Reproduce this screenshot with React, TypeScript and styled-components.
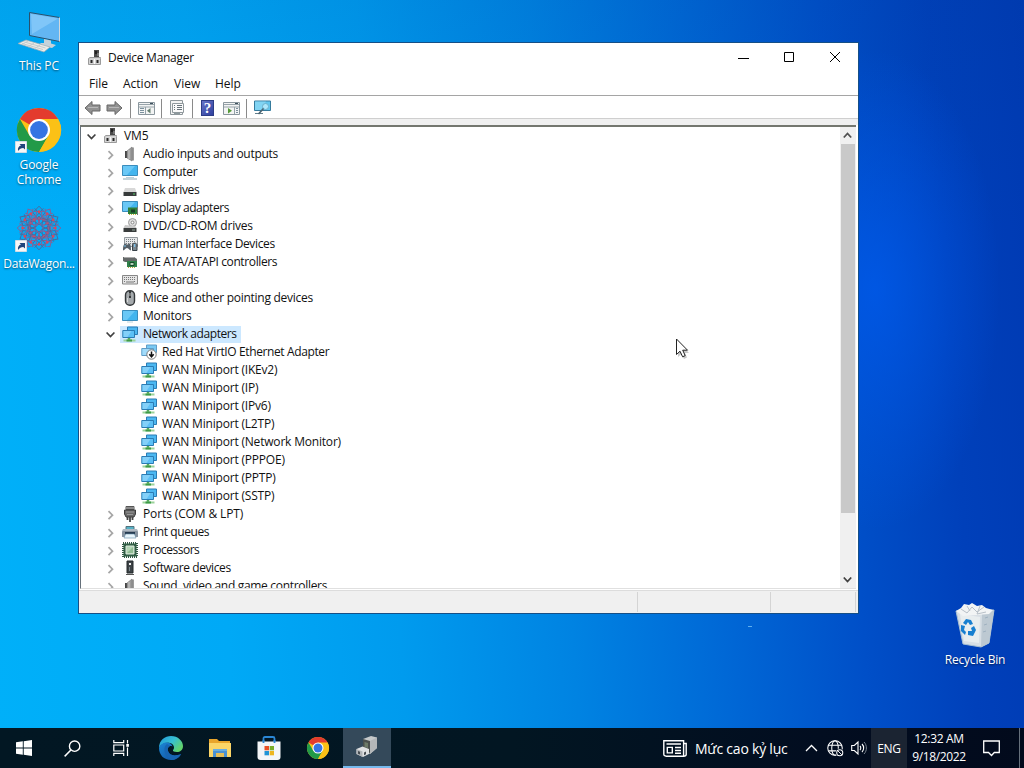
import React from "react";
import styled, { createGlobalStyle } from "styled-components";

const GlobalStyle = createGlobalStyle`
  * { box-sizing: border-box; }
  html, body { margin: 0; padding: 0; overflow: hidden; }
  body { font-family: "Open Sans", "Noto Sans", sans-serif; font-size: 12px; color: #111; }
  svg { display: block; flex: none; }
`;

const Desktop = styled.div`
  position: relative;
  width: 1024px;
  height: 768px;
  overflow: hidden;
  display: flex;
  flex-direction: column;
  background:
    radial-gradient(ellipse 125px 240px at 875px 290px, rgba(0, 92, 240, 0.7), rgba(0, 80, 230, 0) 100%),
    linear-gradient(180deg, rgba(0, 60, 140, 0.1), rgba(0, 60, 140, 0) 30%),
    linear-gradient(86deg, #00b0f9 0%, #00a9f6 22%, #009bee 38%, #0083e2 54%, #0068d6 68%, #004fc8 81%, #0040ba 91%, #003ab3 100%);
`;
const Workspace = styled.main`
  flex: 1;
  position: relative;
`;

/* Desktop shortcuts */
const Shortcut = styled.div<{ $x: number; $y: number; $track?: number }>`
  position: absolute;
  left: ${(p) => p.$x}px;
  top: ${(p) => p.$y}px;
  width: 80px;
  display: flex;
  flex-direction: column;
  align-items: center;
  gap: 1px;
  color: #fff;
  line-height: 15px;
  text-align: center;
  letter-spacing: ${(p) => p.$track ?? -0.1}px;
  text-shadow: 0 1px 2px rgba(0, 0, 0, 0.55);
`;

/* Window */
const Window = styled.section`
  position: absolute;
  left: 78px;
  top: 42px;
  width: 781px;
  height: 572px;
  border: 1px solid #164f86;
  background: #fff;
  display: flex;
  flex-direction: column;
`;
const TitleBar = styled.header`
  height: 29px;
  display: flex;
  align-items: center;
  padding-left: 8px;
`;
const Title = styled.h1`
  margin: 0 auto 0 5px;
  font: inherit;
  letter-spacing: -0.28px;
`;
const CaptionButton = styled.button`
  width: 46px;
  height: 29px;
  padding: 0;
  border: 0;
  background: none;
  display: grid;
  place-items: center;
`;
const MenuBar = styled.nav`
  height: 23px;
  display: flex;
  align-items: center;
  gap: 16px;
  padding-left: 10px;
`;
const MenuItem = styled.span<{ $w: number }>`
  width: ${(p) => p.$w}px;
  white-space: nowrap;
`;
const ToolBar = styled.div`
  height: 24px;
  border-top: 1px solid #a5a5a5;
  border-bottom: 1px solid #cfcfcf;
  display: flex;
  align-items: center;
  padding: 2px 0 0 5px;
`;
const Tool = styled.span<{ $w?: number }>`
  width: ${(p) => p.$w ?? 24}px;
  display: flex;
  align-items: center;
  justify-content: center;
`;
const ToolRule = styled.span`
  width: 1px;
  height: 19px;
  background: #8a8a8a;
  margin: 0 3px;
`;
const Gap = styled.div`
  height: 6px;
  background: #f0f0f0;
`;
const TreePane = styled.div`
  height: 464px;
  margin: 0 2px 0 1px;
  border-top: 2px solid #74776f;
  border-left: 1px solid #64707a;
  border-bottom: 1px solid #e0e0e0;
  display: flex;
`;
const Tree = styled.ul`
  flex: 1;
  margin: 0;
  padding: 0;
  list-style: none;
  overflow: hidden;
`;
const Row = styled.li<{ $depth: number }>`
  height: 18px;
  display: flex;
  align-items: center;
  padding-left: ${(p) => p.$depth * 19 + 5}px;
`;
const Twisty = styled.span`
  width: 15px;
  height: 18px;
  padding-top: 2px;
  display: grid;
  align-items: center;
`;
const Entry = styled.span<{ $selected?: boolean }>`
  height: 17px;
  display: flex;
  align-items: center;
  gap: 5px;
  padding: 0 4px 0 2px;
  background: ${(p) => (p.$selected ? "#cce8ff" : "transparent")};
`;
const Label = styled.span<{ $track: number }>`
  line-height: 15px;
  padding-bottom: 2px;
  white-space: nowrap;
  letter-spacing: ${(p) => p.$track}px;
`;
const ScrollBar = styled.div`
  width: 16px;
  background: #f0f0f0;
  display: flex;
  flex-direction: column;
`;
const ScrollArrow = styled.span`
  height: 17px;
  padding-right: 1px;
  display: grid;
  place-items: center;
`;
const Thumb = styled.div`
  height: 369px;
  margin: 0 1px auto;
  background: #c9c9c9;
`;
const StatusBar = styled.footer`
  flex: 1;
  margin-top: 1px;
  border-top: 1px solid #dcdcdc;
  background: #f0f0f0;
  display: flex;
  padding: 1px 2px 1px 0;
`;
const StatusCell = styled.div<{ $w: number }>`
  width: ${(p) => p.$w}px;
  border-right: 1px solid #d4d4d4;
`;

/* Taskbar */
const TaskBar = styled.footer`
  height: 40px;
  display: flex;
  background: linear-gradient(90deg, #021723 0%, #021622 50%, #020d20 80%, #020a1c 100%);
  color: #fff;
`;
const TaskButton = styled.span<{ $w?: number; $active?: boolean }>`
  width: ${(p) => p.$w ?? 49}px;
  display: grid;
  place-items: center;
  background: ${(p) => (p.$active ? "#34495a" : "transparent")};
  border-bottom: ${(p) => (p.$active ? "2px solid #76b9ed" : "0")};
`;
const News = styled.div`
  margin-left: auto;
  width: 140px;
  display: flex;
  align-items: center;
  gap: 8px;
  font-size: 14px;
  letter-spacing: -0.22px;
  white-space: nowrap;
`;
const Tray = styled.div`
  display: flex;
  align-items: center;
  width: 68px;
`;
const TrayCell = styled.span<{ $w: number }>`
  width: ${(p) => p.$w}px;
  display: grid;
  place-items: center;
`;
const Language = styled.div`
  width: 36px;
  display: grid;
  place-items: center;
  background: #1b2432;
  letter-spacing: -0.3px;
`;
const Clock = styled.div`
  width: 64px;
  padding-top: 2px;
  text-align: center;
  line-height: 18px;
  letter-spacing: -0.35px;
  white-space: nowrap;
`;
const Peek = styled.span`
  width: 5px;
  border-left: 1px solid #66707c;
`;
const Cursor = styled.svg`
  position: absolute;
  left: 675px;
  top: 338px;
`;
const Fleck = styled.span`
  position: absolute;
  left: 748px;
  top: 626px;
  width: 4px;
  height: 1px;
  background: #5fb0f0;
`;

const Ico = ({ s = 16, v = 16, children }: { s?: number; v?: number; children: React.ReactNode }) => (
  <svg width={s} height={s} viewBox={`0 0 ${v} ${v}`} fill="none">{children}</svg>
);

const MachineIcon = () => (
  <Ico>
    <path d="M7 0h5v8H7z" fill="#4a4a4a" />
    <path d="M8 1h2v3H8z" fill="#222" /><path d="M10.500 3h1v3h-1z" fill="#aaa" />
    <path d="M1.500 8.500 3 7.500h10.500l0 1v6h-12z" fill="#d4d4d4" stroke="#9b9b9b" />
    <path d="M3.500 10h2v3h-2zM9.500 10h2v3h-2z" fill="#292929" />
    <path d="M7.500 9v5" stroke="#fafafa" />
  </Ico>
);
const AudioIcon = () => (
  <Ico>
    <path d="M3 5h2v7H3z" fill="#454545" />
    <path d="M5 5 10 1v14l-5-3z" fill="#9c9c9c" stroke="#777" strokeWidth=".6" />
    <path d="M7 4v9" stroke="#ccc" /><path d="M11 1.500v13" stroke="#666" strokeWidth="1.300" />
  </Ico>
);
const ComputerIcon = () => (
  <Ico>
    <path d="M.5 1.500h15v10H.5z" fill="#43b5ee" stroke="#3a8dbd" />
    <path d="M1 2h12L5 11H1z" fill="#7bd0fa" opacity=".7" />
    <path d="M4 13.500h8" stroke="#b9d0db" /><path d="M1 15h14" stroke="#8ba8b5" />
  </Ico>
);
const MonitorIcon = () => (
  <Ico>
    <path d="M.5 2.500h15v10H.5z" fill="#43b5ee" stroke="#3a8dbd" />
    <path d="M1 3h12L5 12H1z" fill="#7bd0fa" opacity=".7" />
    <path d="M5 14h6" stroke="#bcd3de" />
  </Ico>
);
const DiskIcon = () => (
  <Ico>
    <path d="M3 6h10l1.500 4h-13z" fill="#d8d8d8" /><path d="M1.500 10h13v4h-13z" fill="#373b3b" />
    <path d="M11 12h2" stroke="#57ca68" />
  </Ico>
);
const DisplayIcon = () => (
  <Ico>
    <path d="M.5 1.500h15v10H.5z" fill="#43b5ee" stroke="#3a8dbd" />
    <path d="M1 2h12L5 11H1z" fill="#7bd0fa" opacity=".7" />
    <path d="M6 7.500h9V14H6z" fill="#2d7f3a" /><path d="M9 9.500h4v3H9z" fill="#183f26" />
    <path d="M7 14.500h7" stroke="#c5b43d" strokeDasharray="1 1" /><path d="M15.500 7v8" stroke="#777" />
  </Ico>
);
const DvdIcon = () => (
  <Ico>
    <circle cx="10.500" cy="4.500" r="4" fill="#dedede" stroke="#9b9b9b" /><circle cx="10.500" cy="4.500" r="1.400" fill="#fff" stroke="#888" />
    <path d="m3 7-1.500 3h13L13 8z" fill="#c9c9c9" /><path d="M1.500 10h13v4h-13z" fill="#393c3c" />
    <path d="M10 12h3" stroke="#92a499" />
  </Ico>
);
const HidIcon = () => (
  <Ico>
    <path d="M2.500 1.500h13v9h-13z" fill="#e6e8e9" stroke="#93999d" />
    <path d="M4 3.500h10M4 5.500h10M4 7.500h10" stroke="#777d82" strokeDasharray="1 1" />
    <path d="M1 14.500c0-5 1-7 2.500-7l1 1h1.500l1-1C8.500 7.500 9 10 9 14.500c-2 0-2-2.500-4-2.500s-2 2.500-4 2.500Z" fill="#555f67" />
    <path d="M10.500 14.500V9c0-2.500 4.500-2.500 4.500 0v5.500z" fill="#7a868e" stroke="#384249" /><path d="M12.700 8v3" stroke="#7dcfff" />
    <path d="M3 9v2" stroke="#77c3ef" />
  </Ico>
);
const IdeIcon = () => (
  <Ico>
    <path d="M1 3h11l3 2v3H3L1 7z" fill="#656969" /><path d="M2 3.500h10" stroke="#aaa" />
    <path d="M5 7h10v6H5z" fill="#31824b" /><path d="M8 8.500h4v3H8z" fill="#b6d2b9" stroke="#174b2c" />
    <path d="M6 13.500h8" stroke="#bba740" strokeDasharray="1 1" />
  </Ico>
);
const KeyboardIcon = () => (
  <Ico>
    <path d="M.5 3.500h15v8.500H.5z" fill="#e5e5e5" stroke="#878787" />
    <path d="M2 5.500h12M2 7.500h12M2 9.500h2m8 0h2" stroke="#777" strokeDasharray="1 1" /><path d="M4 10h8" stroke="#777" />
  </Ico>
);
const MouseIcon = () => (
  <Ico>
    <rect x="3.500" y=".7" width="9" height="14.600" rx="4.300" fill="#a5aaad" stroke="#34383a" strokeWidth="1.400" />
    <path d="M8 1v7" stroke="#34383a" strokeWidth="2" /><path d="M8 3v3" stroke="#eee" strokeWidth=".7" /><path d="M5.500 8v4" stroke="#d6d6d6" />
  </Ico>
);
const NetShapes = () => (
  <>
    <path d="M5.500 1h10v7.500h-10z" fill="#4bb7f1" stroke="#2b7cb4" />
    <path d="M.8 4.500h11.700v7H.8z" fill="#5cc0f6" stroke="#2b7cb4" />
    <path d="M1.500 5h8l-4 6h-4z" fill="#98d8fb" opacity=".65" />
  </>
);
const NetIcon = () => (
  <Ico>
    <NetShapes />
    <path d="M7 12v2" stroke="#52aa5c" strokeWidth="2.500" /><path d="M1.500 14.500h12" stroke="#9bd39a" strokeWidth="2" /><path d="M4.500 14.500h5.500" stroke="#3f9a48" strokeWidth="2" />
  </Ico>
);
const NetDisabledIcon = () => (
  <Ico>
    <g opacity=".75"><NetShapes /></g>
    <circle cx="10.500" cy="10.500" r="4.700" fill="#fff" stroke="#777" />
    <path d="M10.500 7.500v5M8.300 10.300l2.200 2.500 2.200-2.500" stroke="#111" strokeWidth="1.500" />
  </Ico>
);
const PortIcon = () => (
  <Ico>
    <path d="M4 .5h8v3H4z" fill="#c2c2c2" stroke="#555" /><path d="M6 .5v3M8 .5v3M10 .5v3" stroke="#555" />
    <path d="M2.500 4h11v4L12 11H4L2.500 8z" fill="#696969" stroke="#3c3c3c" /><path d="M4 6h8M5 8.500h6" stroke="#999" />
    <path d="M5.500 11v3M8 11v5M10.500 11v3" stroke="#444" strokeWidth="1.800" />
  </Ico>
);
const PrintIcon = () => (
  <Ico>
    <path d="M4 2.500h8v4H4z" fill="#56b1c6" stroke="#52727d" />
    <path d="M1 5h14l1 3v5H0V8z" fill="#8793a0" /><path d="M1 6h14" stroke="#d7dfe5" />
    <path d="M3 8h10v3H3z" fill="#263b50" /><path d="M3.500 10h9l1.500 4H2z" fill="#e8f5fc" stroke="#6389a4" strokeWidth=".6" />
  </Ico>
);
const CpuIcon = () => (
  <Ico>
    <rect x="1" y="1" width="14" height="14" stroke="#305643" strokeWidth="2" strokeDasharray="1 1" />
    <path d="M1.500 1.500h13v13h-13z" fill="#315e45" /><path d="M4 4h8v8H4z" fill="#b4d6b6" stroke="#dce9dd" /><path d="M5 11 11 5v6z" fill="#91bc94" />
  </Ico>
);
const SoftwareIcon = () => (
  <Ico>
    <path d="M5 1h6v12H5z" fill="#3d4347" stroke="#22282b" /><path d="M7 3h2v2H7z" fill="#f1f1f1" />
    <path d="M7.500 7v4" stroke="#7b878d" /><path d="M4 14.500h8" stroke="#555" />
  </Ico>
);

const Chevron = ({ open }: { open?: boolean }) => (
  <svg width="12" height="12" viewBox="0 0 12 12" fill="none">
    {open ? <path d="m1.600 3.500 3.900 4 3.900-4" stroke="#404040" strokeWidth="1.700" /> : <path d="m3.500 2.200 4 4-4 4" stroke="#a6a6a6" strokeWidth="1.700" />}
  </svg>
);

const ChromeLogo = ({ size }: { size: number }) => (
  <Ico s={size} v={48}>
    <circle cx="24" cy="24" r="22" fill="#fbc116" />
    <path d="M24 24 4.900 13A22 22 0 0 1 43.100 13z" fill="#e33b2e" />
    <path d="M4.900 13A22 22 0 0 0 24 46l9.500-16.500L14.500 29.500z" fill="#229a48" />
    <path d="M24 13h19.100A22 22 0 0 1 24 46l9.500-16.500z" fill="#fbc116" />
    <circle cx="24" cy="24" r="11" fill="#fff" /><circle cx="24" cy="24" r="8.900" fill="#3574e3" />
  </Ico>
);
const ArrowBadge = () => (
  <g>
    <path d="M.5 34.500h11v11H.5z" fill="#f7f7f7" stroke="#d0dce5" />
    <path d="M3 44c-.5-3.500 1-5 3-5.500L4.500 37H10v5.500L8.300 41C6 41 4.500 42 3 44Z" fill="#20457c" />
  </g>
);
const Stack = styled.div<{ $h: number }>`
  position: relative;
  width: 48px;
  height: ${(p) => p.$h}px;
  display: grid;
  align-items: start;
  justify-items: center;
`;
const Overlay = styled.svg<{ $top: number }>`
  position: absolute;
  left: 0;
  top: ${(p) => p.$top}px;
`;
const ThisPcIcon = () => (
  <svg width="48" height="48" viewBox="0 0 48 48">
    <path d="m14.500 3.500 30 5v24l-30-6z" fill="#63b6f3" stroke="#28516e" />
    <path d="m16 5 27 4.500L17 25z" fill="#91d0fa" opacity=".65" />
    <path d="M44.500 8.500v24" stroke="#d1d8dd" />
    <path d="m29 30 7 1.500v3l5 1.500-4 3-14-3 3-2h3z" fill="#c4d2da" />
    <path d="M3 34.500 11 31l24 7-6 5z" fill="#ecebe6" stroke="#9aabb5" strokeWidth=".7" />
    <path d="m7 34.500 21 6M9.500 33l21 6M13 32l-6 3.500M19 34l-6 4M25 36l-6 4" stroke="#c3cbcf" />
  </svg>
);
const petals = Array.from({ length: 12 }, (_, i) => i * 30);
const WagonIcon = () => (
  <svg width="48" height="48" viewBox="2 2 44 44" fill="none" strokeWidth=".9">
    {petals.map((a, i) => (
      <g key={a} transform={`rotate(${a} 24 24)`} stroke={i % 2 ? "#8d5d92" : "#4a6a9d"}>
        <path d="m24 4 5.500 6-5.500 7-5.500-7zM20 6l10 11M28 6 18 17M24 13l4 5-4 3-4-3z" />
        <circle cx="24" cy="9" r=".9" fill="#d8485e" stroke="#d8485e" />
        <circle cx="24" cy="15" r=".6" stroke="#d8485e" />
      </g>
    ))}
  </svg>
);
const RecycleIcon = () => (
  <svg width="48" height="48" viewBox="0 0 48 48">
    <path d="m5 10 38-1-5 33-8 4-18-3z" fill="#d8dfe5" stroke="#a8c0d3" />
    <path d="m31 12 12-3-5 33-8 4z" fill="#bdc9d2" />
    <path d="m5 10 5-3 3-4 5 1 3-2 5 3 5-1 4 3 7 2-4 4-26 2z" fill="#f2f4f5" />
    <path d="m10 8 6 4 5-6 5 5 7-5M16 5l3 5M29 5l-3 8 9-2" stroke="#b8c0c8" fill="none" />
    <path d="m9 13 20 3-1 26-15-2z" fill="#eff2f3" opacity=".7" />
    <path d="m12 22 3-4 5 1 2 4-3 1-2-3-2 3zM10 24l4 1-1 4 2 2-1 3-4-4zM23 25l2 4-3 6-5-1v-4h4l-1-3z" fill="#177fd0" />
    <path d="m34 17 3-1m-4 8 3-1m-4 8 3-1" stroke="#9fb1c0" />
  </svg>
);

const Arrow = ({ flip }: { flip?: boolean }) => (
  <svg width="17" height="16" viewBox="0 0 17 16">
    <g transform={flip ? "translate(17 0) scale(-1 1)" : undefined}>
      <path d="M1 8 8 1.500V5h8v6H8v3.500z" fill="#929292" stroke="#666" />
      <path d="M4 7.500h10" stroke="#b8b8b8" />
    </g>
  </svg>
);
const PaneTool = ({ right }: { right?: boolean }) => (
  <svg width="17" height="16" viewBox="0 0 17 16" fill="none">
    <path d="M.5 2.500h16v12H.5z" fill="#f3f4f4" stroke="#8b979e" />
    <path d="M1 4.500h15M1 7h15" stroke="#98a4aa" /><path d="M12 3.500h3" stroke="#3f525e" />
    <path d={right ? "M11.500 7v7" : "M7.500 7v7"} stroke="#94a1a8" />
    <path d={right ? "M13 8.500h2m-2 2h2m-2 2h2" : "M2 8.500h4m-4 2h4m-4 2h4"} stroke="#7b909d" />
    <path d={right ? "m5 8 4 2.700-4 2.800z" : "m12.500 8-3.500 2.700 3.500 2.800z"} fill={right ? "#559b39" : "#668070"} />
  </svg>
);
const PropTool = () => (
  <Ico>
    <path d="M1.500 .5h12v14h-12z" fill="#f3f3f3" stroke="#8e979b" /><path d="M3.500 3.500h11v9h-11z" fill="#fafafa" stroke="#90999d" />
    <path d="M5 5.500h1m2 0h5M5 7.500h1m2 0h5M5 9.500h1m2 0h5" stroke="#68737a" /><path d="M5 13.500h6" stroke="#8b979c" />
  </Ico>
);
const Mark = styled.span`
  width: 13px;
  height: 16px;
  background: linear-gradient(135deg, #6573c5, #2f409f);
  border: 1px solid #2c3c86;
  color: #fff;
  font: bold 15px/14px "Liberation Serif", serif;
  text-align: center;
`;
const ScanTool = () => (
  <svg width="17" height="16" viewBox="0 0 17 16" fill="none">
    <path d="M.5 1h16v9.500H.5z" fill="#62c6ee" stroke="#367b9d" /><path d="M1 1.500h11l-5 8.500H1z" fill="#96ddf7" opacity=".6" />
    <path d="M1 13.500h8" stroke="#617e8c" /><circle cx="11.500" cy="6.500" r="3" fill="#aee7fb" stroke="#6bb0cc" /><path d="m9.500 8.500-5 5.500" stroke="#4d6470" strokeWidth="1.600" />
  </svg>
);

type Item = { icon: () => React.ReactElement; text: string; track: number; depth: number; open?: boolean; selected?: boolean };
const wan = (text: string): Item => ({ icon: NetIcon, text: `WAN Miniport (${text})`, track: -0.19, depth: 2 });
const items: Item[] = [
  { icon: MachineIcon, text: "VM5", track: -0.1, depth: 0, open: true },
  { icon: AudioIcon, text: "Audio inputs and outputs", track: -0.29, depth: 1 },
  { icon: ComputerIcon, text: "Computer", track: -0.25, depth: 1 },
  { icon: DiskIcon, text: "Disk drives", track: -0.4, depth: 1 },
  { icon: DisplayIcon, text: "Display adapters", track: -0.46, depth: 1 },
  { icon: DvdIcon, text: "DVD/CD-ROM drives", track: -0.22, depth: 1 },
  { icon: HidIcon, text: "Human Interface Devices", track: -0.36, depth: 1 },
  { icon: IdeIcon, text: "IDE ATA/ATAPI controllers", track: -0.38, depth: 1 },
  { icon: KeyboardIcon, text: "Keyboards", track: -0.43, depth: 1 },
  { icon: MouseIcon, text: "Mice and other pointing devices", track: -0.26, depth: 1 },
  { icon: MonitorIcon, text: "Monitors", track: -0.25, depth: 1 },
  { icon: NetIcon, text: "Network adapters", track: -0.44, depth: 1, open: true, selected: true },
  { icon: NetDisabledIcon, text: "Red Hat VirtIO Ethernet Adapter", track: -0.38, depth: 2 },
  wan("IKEv2"), wan("IP"), wan("IPv6"), wan("L2TP"),
  wan("Network Monitor"), wan("PPPOE"), wan("PPTP"), wan("SSTP"),
  { icon: PortIcon, text: "Ports (COM & LPT)", track: -0.12, depth: 1 },
  { icon: PrintIcon, text: "Print queues", track: -0.43, depth: 1 },
  { icon: CpuIcon, text: "Processors", track: -0.48, depth: 1 },
  { icon: SoftwareIcon, text: "Software devices", track: -0.4, depth: 1 },
  { icon: AudioIcon, text: "Sound, video and game controllers", track: -0.31, depth: 1 },
];

const WinLogo = () => (
  <Ico s={16}><path d="M0 2.300 6.800 1.300v6.300H0zM7.700 1.200 16 0v7.600H7.700zM0 8.500h6.800v6.300L0 13.800zM7.700 8.500H16V16l-8.300-1.200z" fill="#fff" /></Ico>
);
const SearchGlyph = () => (
  <Ico s={17}><circle cx="10" cy="5.800" r="4.900" stroke="#fff" strokeWidth="1.300" /><path d="M6.500 9.400.6 15.400" stroke="#fff" strokeWidth="1.400" /></Ico>
);
const TaskViewGlyph = () => (
  <svg width="17" height="16" viewBox="0 0 17 16" fill="none" stroke="#fff" strokeWidth="1.200">
    <path d="M.8 0v2.700h9.900V0M.8 16v-2.700h9.900V16M.8 5h9.900v6H.8zM14.500 0v3.500M14.500 7.500V16" /><path d="M13.300 4h2.600v2.800h-2.600z" fill="#fff" stroke="none" />
  </svg>
);
const EdgeLogo = () => (
  <svg width="26" height="26" viewBox="0 0 26 26">
    <defs>
      <linearGradient id="edgeTop" x1="0" y1="0" x2="1" y2=".6"><stop stopColor="#2097d9" /><stop offset=".55" stopColor="#36bfd3" /><stop offset="1" stopColor="#62d36b" /></linearGradient>
      <linearGradient id="edgeLow" x1="0" y1="0" x2="1" y2="1"><stop stopColor="#1c86d6" /><stop offset="1" stopColor="#104f9d" /></linearGradient>
    </defs>
    <path d="M1 13C1 5 7 1 13 1c7 0 12 5 12 10 0 4-3 6-6 6-3 0-4.500-1-4-2 2-2 1-6-3-7C7 7 3 9 1 13Z" fill="url(#edgeTop)" />
    <path d="M1 13c1-3.500 4.500-5.500 8-5.500 3 0 5 2 5.500 4C11 10 9 13 10 16c1 4 6 6 13 3-2 4-6 6-10 6C6 25 1 20 1 13Z" fill="url(#edgeLow)" />
    <path d="M9 9c-4 3-4 11 4 16 4 0 8-2 10-6-7 3-12 1-13-3-.7-2 0-4 2-5z" fill="#1765b3" />
  </svg>
);
const FolderLogo = () => (
  <svg width="22" height="20" viewBox="0 0 22 20">
    <path d="M0 1h8l2 2h11v5H0z" fill="#e9a52b" /><path d="M0 5h22v14H0z" fill="#fbd567" />
    <path d="M4 11h14v8h-3v-4H7v4H4z" fill="#4a91d2" /><path d="M7 15h8v4H7z" fill="#e5bd56" /><path d="M4 11h14v2H4z" fill="#69ade0" />
  </svg>
);
const StoreLogo = () => (
  <svg width="24" height="25" viewBox="0 0 24 25">
    <path d="M6.500 7V2.500C6.500 1.500 7 1 8 1h8c1 0 1.500.5 1.500 1.500V7" stroke="#2a87d5" strokeWidth="1.800" fill="none" />
    <path d="M.5 5.500h23V21c0 2-1 3-3 3h-17c-2 0-3-1-3-3z" fill="#f3f6f8" />
    <path d="M6.500 4v3M17.500 4v3" stroke="#2a87d5" strokeWidth="1.800" />
    <path d="M7.500 10H12v4.300H7.500z" fill="#e95027" /><path d="M12.700 10H17v4.300h-4.300z" fill="#79ad28" /><path d="M7.500 15H12v4.300H7.500z" fill="#2095d7" /><path d="M12.700 15H17v4.300h-4.300z" fill="#edb61e" />
  </svg>
);
const DeviceLogo = () => (
  <svg width="24" height="22" viewBox="0 0 24 22">
    <path d="m8 3 8-3 6 1.500V12l-7 6-7-4z" fill="#c6c9ca" /><path d="m8 3 7 2v12l-7-3z" fill="#4a4f4c" /><path d="m15 5 7-3.500V12l-7 6z" fill="#b4b7b9" />
    <path d="m9.500 6 3.500 1v5l-3.500-1z" fill="#6d7a68" />
    <path d="m1.500 13 6-2.500 6.500 2.500v5l-6 3-6.500-3z" fill="#dfe1e2" /><path d="m1.500 13 6 2.500V21l-6-3z" fill="#b0b4b7" /><path d="m3 15 2 .8v2.700l-2-.8zm6 1.500 2-1v2.800l-2 1z" fill="#454b50" />
  </svg>
);

const NewsGlyph = () => (
  <svg width="24" height="17" viewBox="0 0 24 17" fill="none" stroke="#fff" strokeWidth="1.400">
    <path d="M.8.8h19.800v15.400H3.200C1.500 16.200.8 15.300.8 14zM20.600 3.500h2.600v11c0 1-1 1.700-2.600 1.700" />
    <path d="M3.500 4h14.500M12 7.500h6M12 10.500h6M12 13.300h6M4.300 7.400h5v5.500h-5z" />
  </svg>
);
const Globe = () => (
  <Ico s={17} v={18}>
    <g stroke="#fff" strokeWidth="1.100"><circle cx="8.500" cy="8.500" r="7.700" /><ellipse cx="8.500" cy="8.500" rx="3.500" ry="7.700" /><path d="M1.500 5.500h14M1.500 11.500h14" /></g>
    <circle cx="13.500" cy="13.500" r="4.500" fill="#020d20" /><circle cx="13.500" cy="13.500" r="3.200" stroke="#fff" strokeWidth="1.100" /><path d="m11.300 11.300 4.400 4.400" stroke="#fff" />
  </Ico>
);
const Speaker = () => (
  <Ico s={16}>
    <path d="M.7 5.500h2.600L7 2v12l-3.700-3.500H.7z" stroke="#fff" strokeWidth="1.100" />
    <path d="M9 6c1 1 1 3 0 4M11 4c2.200 2.200 2.200 5.800 0 8" stroke="#fff" strokeWidth="1.100" /><path d="M13 2c3.200 3.200 3.200 8.800 0 12" stroke="#7b8490" />
  </Ico>
);

export default function App() {
  return (
    <Desktop>
      <GlobalStyle />
      <Workspace>
        <Shortcut $x={-1} $y={9}><ThisPcIcon />This PC</Shortcut>
        <Shortcut $x={-1} $y={106}>
          <Stack $h={50}><ChromeLogo size={48} /><Overlay $top={1} width="48" height="48"><ArrowBadge /></Overlay></Stack>
          Google<br />Chrome
        </Shortcut>
        <Shortcut $x={-1} $y={204} $track={-0.27}>
          <Stack $h={51}><WagonIcon /><Overlay $top={2} width="48" height="48"><ArrowBadge /></Overlay></Stack>
          DataWagon...
        </Shortcut>
        <Shortcut $x={935} $y={601} $track={-0.2}><Stack $h={50}><RecycleIcon /></Stack>Recycle Bin</Shortcut>

        <Window>
          <TitleBar>
            <MachineIcon />
            <Title>Device Manager</Title>
            <CaptionButton aria-label="Minimize"><svg width="11" height="11"><path d="M0 6.500h11" stroke="#000" /></svg></CaptionButton>
            <CaptionButton aria-label="Maximize"><svg width="11" height="11"><path d="M.5.5h9v9h-9z" stroke="#000" fill="none" /></svg></CaptionButton>
            <CaptionButton aria-label="Close"><svg width="11" height="11"><path d="m0 0 10 10m0-10-10 10" stroke="#000" /></svg></CaptionButton>
          </TitleBar>
          <MenuBar>
            <MenuItem $w={18}>File</MenuItem><MenuItem $w={35}>Action</MenuItem><MenuItem $w={25}>View</MenuItem><MenuItem $w={26}>Help</MenuItem>
          </MenuBar>
          <ToolBar>
            <Tool $w={17}><Arrow /></Tool><Tool $w={26}><Arrow flip /></Tool>
            <ToolRule />
            <Tool><PaneTool /></Tool>
            <ToolRule />
            <Tool><PropTool /></Tool>
            <ToolRule />
            <Tool $w={23}><Mark>?</Mark></Tool><Tool $w={24}><PaneTool right /></Tool>
            <ToolRule />
            <Tool $w={25}><ScanTool /></Tool>
          </ToolBar>
          <Gap />
          <TreePane>
            <Tree>
              {items.map(({ icon: Icon, ...it }) => (
                <Row key={it.text} $depth={it.depth}>
                  <Twisty>{it.depth < 2 && <Chevron open={it.open} />}</Twisty>
                  <Entry $selected={it.selected}><Icon /><Label $track={it.track}>{it.text}</Label></Entry>
                </Row>
              ))}
            </Tree>
            <ScrollBar>
              <ScrollArrow><svg width="9" height="7" fill="none"><path d="m.8 5.500 3.700-4 3.700 4" stroke="#505050" strokeWidth="1.800" /></svg></ScrollArrow>
              <Thumb />
              <ScrollArrow><svg width="9" height="7" fill="none"><path d="m.8 1.500 3.700 4 3.700-4" stroke="#404040" strokeWidth="1.800" /></svg></ScrollArrow>
            </ScrollBar>
          </TreePane>
          <StatusBar><StatusCell $w={559} /><StatusCell $w={133} /><StatusCell $w={85} /></StatusBar>
        </Window>
        <Fleck />
        <Cursor width="15" height="22" viewBox="0 0 15 22">
          <path d="M3 3v16l3.500-3 2.500 5 3-1.500L10 15h4z" fill="#777" opacity=".4" />
          <path d="M1.500 1v15.500l3.500-3.300 2.600 5.600 2.600-1.200-2.500-5.400h4.800z" fill="#fff" stroke="#222" />
        </Cursor>
      </Workspace>

      <TaskBar>
        <TaskButton $w={48}><WinLogo /></TaskButton>
        <TaskButton $w={48}><SearchGlyph /></TaskButton>
        <TaskButton $w={50}><TaskViewGlyph /></TaskButton>
        <TaskButton><EdgeLogo /></TaskButton>
        <TaskButton><FolderLogo /></TaskButton>
        <TaskButton $w={49}><StoreLogo /></TaskButton>
        <TaskButton $w={50}><ChromeLogo size={24} /></TaskButton>
        <TaskButton $w={48} $active><DeviceLogo /></TaskButton>
        <News><NewsGlyph />Mức cao kỷ lục</News>
        <Tray>
          <TrayCell $w={16}><svg width="13" height="8" fill="none"><path d="m1 7 5.500-5.500L12 7" stroke="#fff" strokeWidth="1.300" /></svg></TrayCell>
          <TrayCell $w={32}><Globe /></TrayCell>
          <TrayCell $w={14}><Speaker /></TrayCell>
        </Tray>
        <Language>ENG</Language>
        <Clock>12:32 AM<br />9/18/2022</Clock>
        <TaskButton $w={40}>
          <svg width="17" height="17" viewBox="0 0 17 17" fill="none"><path d="M.7 1h15.600v11.500h-5L8.500 15.500l-3-3H.7z" stroke="#fff" strokeWidth="1.300" /></svg>
        </TaskButton>
        <TaskButton $w={8} />
        <Peek />
      </TaskBar>
    </Desktop>
  );
}
